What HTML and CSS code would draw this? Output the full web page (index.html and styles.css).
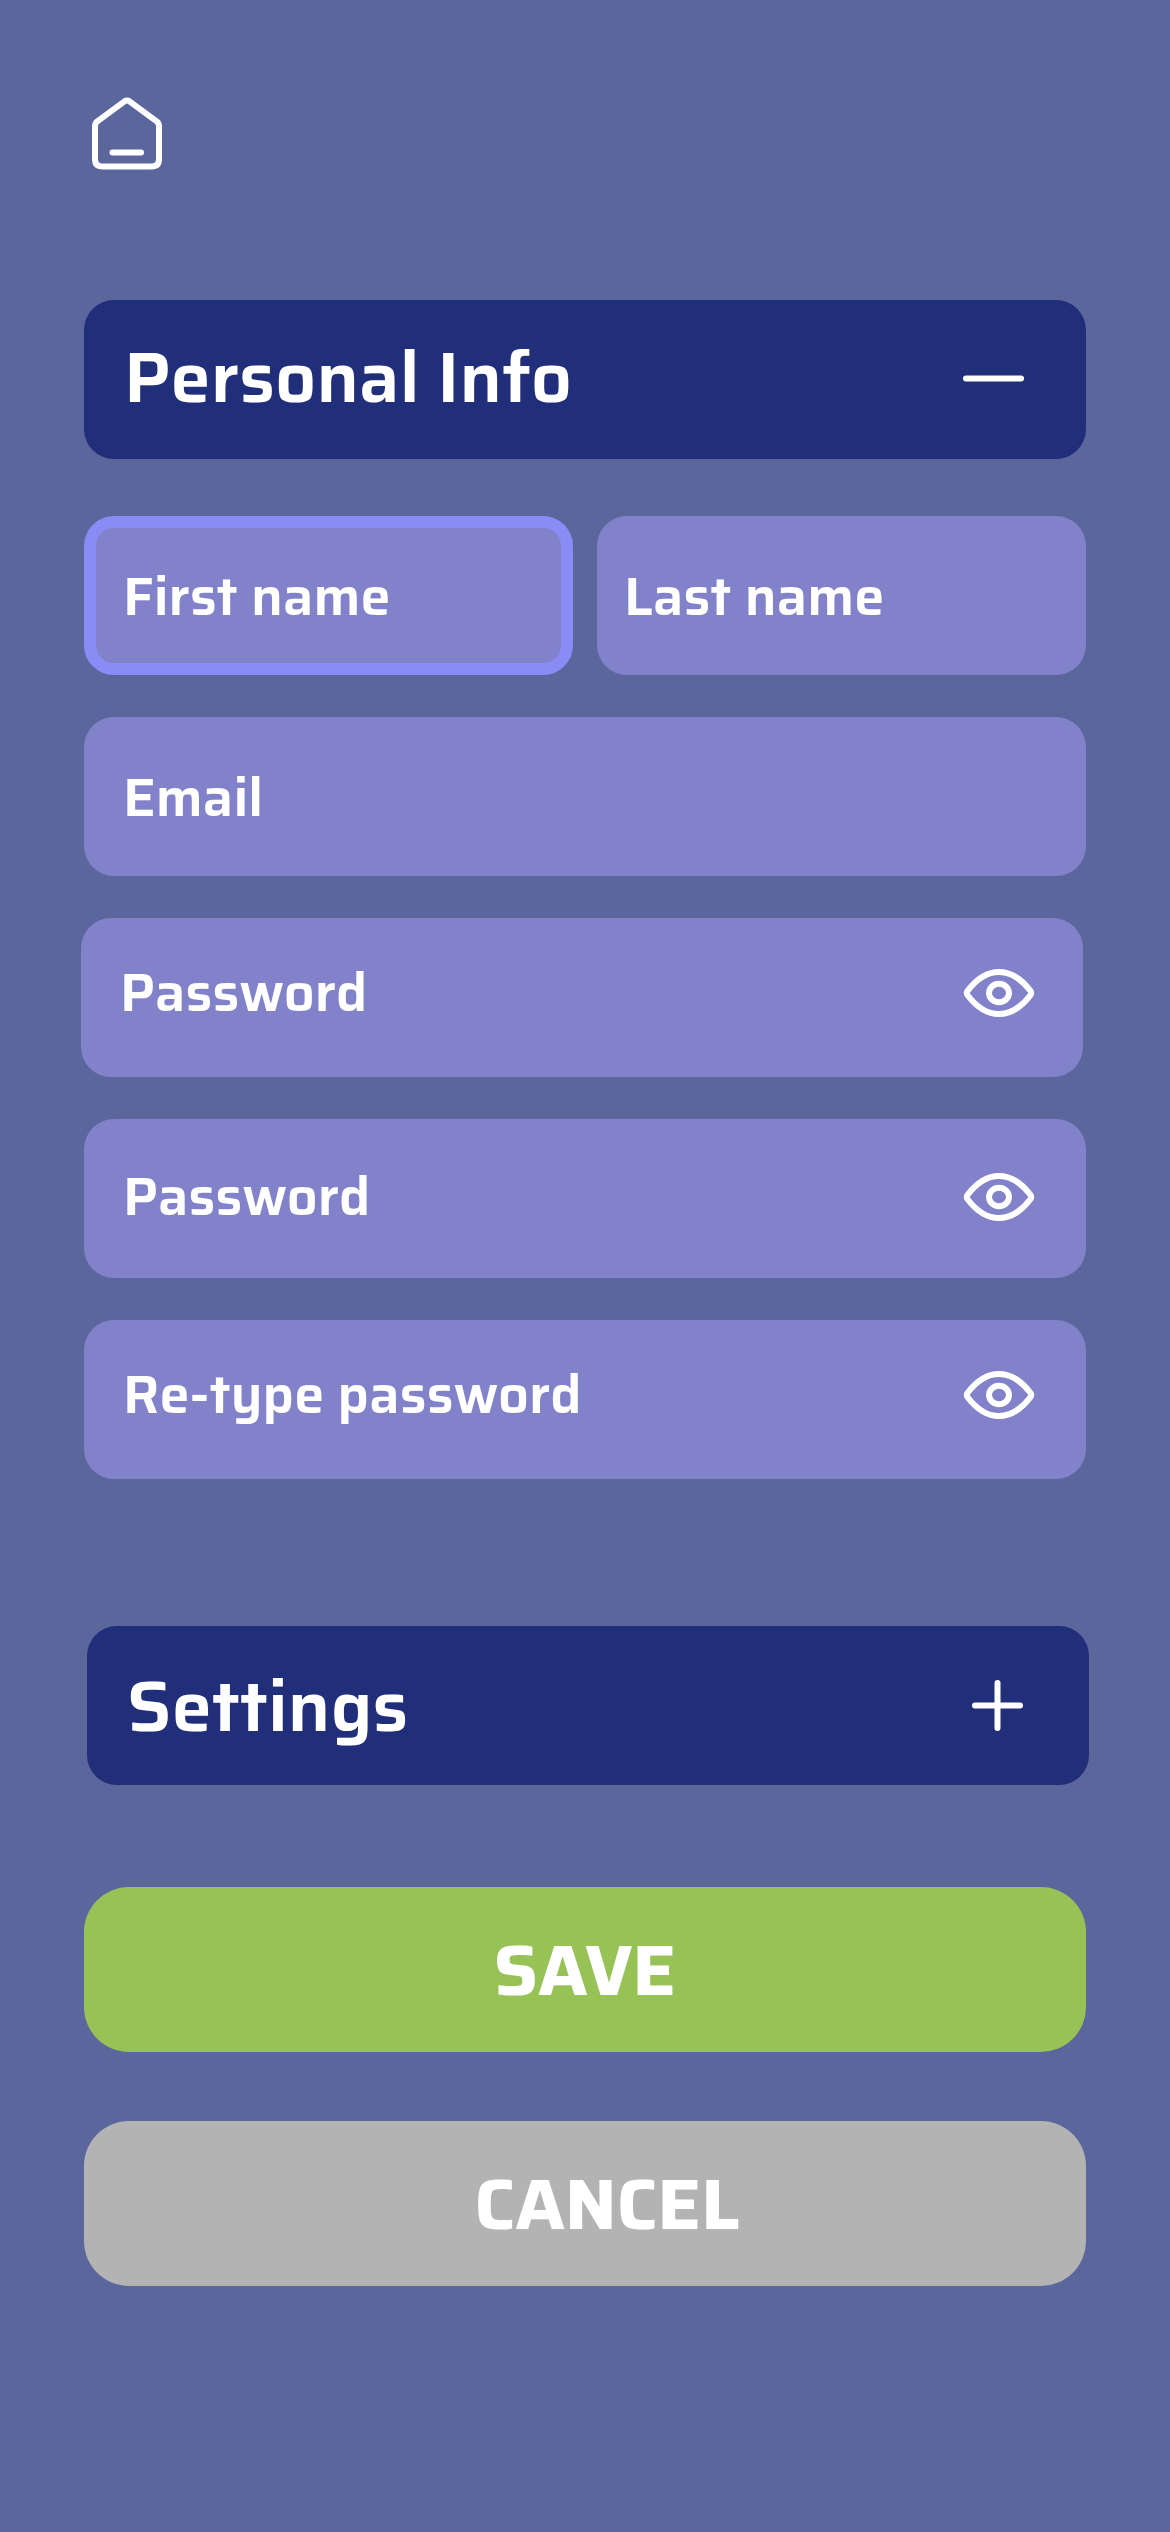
FILE: index.html
```
<!DOCTYPE html>
<html lang="en">
<head>
<meta charset="utf-8">
<title>Personal Info</title>
<link rel="stylesheet" href="styles.css">
</head>
<body>
<svg class="defs" width="0" height="0" aria-hidden="true">
  <symbol id="eye" viewBox="0 0 72 50">
    <path d="M4.600 22.800C14 10.500 24.500 4 36 4S58 10.500 67.400 22.800Q69 25 67.400 27.200C58 39.500 47.500 46 36 46S14 39.500 4.600 27.200Q3 25 4.600 22.800Z"/>
    <ellipse cx="36" cy="25" rx="10" ry="9.200"/>
  </symbol>
</svg>
<main class="screen">
  <nav class="top">
    <svg class="icon home" width="72" height="73" viewBox="0 0 72 73">
      <path d="M33.500 4.300 6.300 24.300Q4 26.300 4 29.500V62Q4 69.500 11.500 69.500H60.500Q68 69.500 68 62V29.500Q68 26.300 65.700 24.300L38.500 4.300Q36 2.600 33.500 4.300Z"/>
      <path d="M21.500 55.500H50"/>
    </svg>
  </nav>
  <header class="panel panel-info">
    <h1 class="title">Personal Info</h1>
    <svg class="icon minus" width="61" height="61" viewBox="0 0 61 61"><path d="M3 30.500H58"/></svg>
  </header>
  <form class="fields">
    <div class="names">
      <div class="field focused"><span class="label">First name</span></div>
      <div class="field last-field"><span class="label">Last name</span></div>
    </div>
    <div class="field"><span class="label">Email</span></div>
    <div class="field raised current"><span class="label">Password</span><svg class="icon eye" width="72" height="50"><use href="#eye"/></svg></div>
    <div class="field slight"><span class="label">Password</span><svg class="icon eye" width="72" height="50"><use href="#eye"/></svg></div>
    <div class="field raised"><span class="label">Re-type password</span><svg class="icon eye" width="72" height="50"><use href="#eye"/></svg></div>
  </form>
  <section class="panel panel-settings">
    <h2 class="title">Settings</h2>
    <svg class="icon plus" width="51" height="51" viewBox="0 0 51 51"><path d="M3 25.500H48M25.500 3V48"/></svg>
  </section>
  <button class="button save" type="button">SAVE</button>
  <button class="button cancel" type="button">CANCEL</button>
</main>
</body>
</html>
```
FILE: styles.css
```
* { box-sizing: border-box; }

body {
  margin: 0;
  background: #5b669d;
  color: #fff;
  font-family: Saira, Roboto, sans-serif;
}

.defs { display: block; }

.screen {
  width: 1170px;
  height: 2532px;
  padding: 97px 84px 0;
  display: flex;
  flex-direction: column;
}

.top {
  height: 203px;
  padding-left: 7px;
}

.icon {
  display: block;
  flex: none;
  fill: none;
  stroke: #fff;
  stroke-width: 6px;
  stroke-linecap: round;
  stroke-linejoin: round;
}

.panel {
  height: 159px;
  flex: none;
  display: flex;
  align-items: center;
  justify-content: space-between;
  border-radius: 30px;
  background: #212e7a;
}

.panel-info { padding: 0 62px 5px 40px; }

.panel-settings {
  margin: 147px -3px 0 3px;
  padding: 1px 66px 0 40px;
}

.minus { margin-top: 2px; }
.plus { margin-bottom: 1px; }
.eye { margin-top: 1px; }

.title {
  margin: 0;
  font-size: 72px;
  font-weight: 600;
  line-height: 90px;
}

.fields {
  margin-top: 57px;
  display: flex;
  flex-direction: column;
  gap: 42px;
}

.names {
  display: grid;
  grid-template-columns: 1fr 1fr;
  gap: 24px;
}

.field {
  height: 159px;
  padding: 2px 51px 0 39px;
  display: flex;
  align-items: center;
  justify-content: space-between;
  border-radius: 30px;
  background: #8182c9;
}

.focused {
  border: 12px solid #8a8cf6;
  padding-left: 27px;
}

.last-field { padding-left: 27px; }

.raised { padding-top: 0; padding-bottom: 10px; }
.slight { padding-top: 0; padding-bottom: 4px; }

.current {
  margin: 0 3px 0 -3px;
  padding-right: 48px;
}

.label {
  font-size: 54px;
  font-weight: 600;
  line-height: 71px;
  white-space: nowrap;
}

.button {
  height: 165px;
  flex: none;
  padding: 1px 0 0;
  border: 0;
  border-radius: 45px;
  color: #fff;
  font-family: inherit;
  font-size: 72px;
  font-weight: 700;
  line-height: 90px;
}

.save {
  margin-top: 102px;
  background: #97c256;
}

.cancel {
  margin-top: 69px;
  padding-left: 44px;
  background: #b3b3b3;
}
```
